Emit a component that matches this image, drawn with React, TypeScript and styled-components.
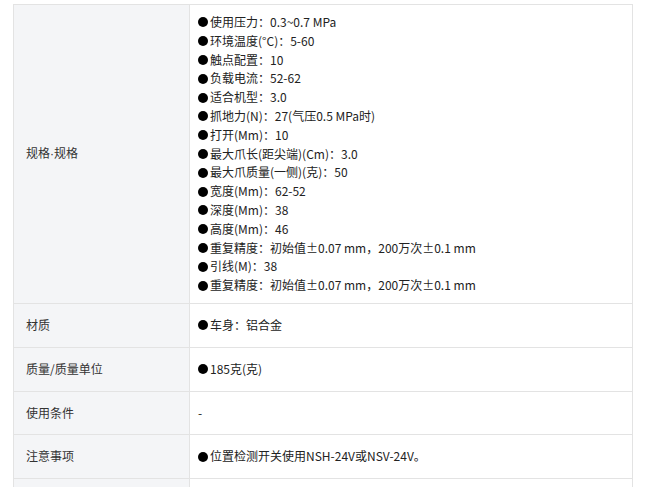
import React from "react";
import styled, { createGlobalStyle } from "styled-components";

const Global = createGlobalStyle`
  body {
    margin: 0;
    background: #fff;
    font-family: "Noto Sans CJK SC", "Liberation Sans", sans-serif;
  }
`;

const Wrap = styled.div`
  padding: 4px 0 0 13px;
`;

const Table = styled.table`
  width: 620px;
  border-collapse: collapse;
  font-size: 12px;
  line-height: 18.8px;
`;

const Label = styled.td`
  width: 163px;
  padding: 12px 0 12px 12px;
  background: #f4f5f7;
  border: 1px solid #e3e3e3;
  color: #333;
  vertical-align: middle;
`;

const Sep = styled.span`
  font-family: "Liberation Sans", sans-serif;
`;

const Value = styled.td<{ $dense?: boolean }>`
  padding: ${(p) => (p.$dense ? "8px" : "12px")} 8px;
  border: 1px solid #e3e3e3;
  color: #222;
  vertical-align: middle;
`;

const Line = styled.div`
  display: flex;
  align-items: center;
  white-space: nowrap;
`;

const Dot = styled.span`
  display: inline-block;
  width: 10px;
  height: 10px;
  border-radius: 50%;
  background: #000;
  margin-right: 2px;
  flex-shrink: 0;
`;

const specs = [
  "使用压力：0.3~0.7 MPa",
  "环境温度(°C)：5-60",
  "触点配置：10",
  "负载电流：52-62",
  "适合机型：3.0",
  "抓地力(N)：27(气压0.5 MPa时)",
  "打开(Mm)：10",
  "最大爪长(距尖端)(Cm)：3.0",
  "最大爪质量(一侧)(克)：50",
  "宽度(Mm)：62-52",
  "深度(Mm)：38",
  "高度(Mm)：46",
  "重复精度：初始值±0.07 mm，200万次±0.1 mm",
  "引线(M)：38",
  "重复精度：初始值±0.07 mm，200万次±0.1 mm",
];

const rows: { label: string; items: string[]; plain?: string }[] = [
  { label: "材质", items: ["车身：铝合金"] },
  { label: "质量/质量单位", items: ["185克(克)"] },
  { label: "使用条件", items: [], plain: "-" },
  { label: "注意事项", items: ["位置检测开关使用NSH-24V或NSV-24V。"] },
];

const Item = ({ text }: { text: string }) => (
  <Line>
    <Dot />
    {text}
  </Line>
);

export default function App() {
  return (
    <Wrap>
      <Global />
      <Table>
        <tbody>
          <tr>
            <Label>
              规格<Sep>·</Sep>规格
            </Label>
            <Value $dense>
              {specs.map((s, i) => (
                <Item key={i} text={s} />
              ))}
            </Value>
          </tr>
          {rows.map((r) => (
            <tr key={r.label}>
              <Label>{r.label}</Label>
              <Value>
                {r.plain ?? r.items.map((s) => <Item key={s} text={s} />)}
              </Value>
            </tr>
          ))}
          <tr>
            <Label>&nbsp;</Label>
            <Value>&nbsp;</Value>
          </tr>
        </tbody>
      </Table>
    </Wrap>
  );
}
